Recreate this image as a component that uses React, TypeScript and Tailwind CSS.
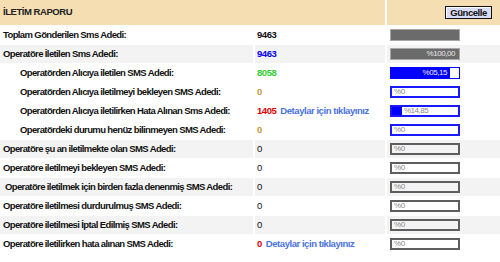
import React from "react";

type BarKind = "solid" | "blueFull" | "blue" | "gray";

type ReportRow = {
  label: string;
  indent?: "sub" | "space";
  value: string;
  valueClass: string;
  link?: boolean;
  gray?: boolean;
  bar: BarKind;
  barText?: string;
  fill?: number;
};

const rows: ReportRow[] = [
  { label: "Toplam Gönderilen Sms Adedi:", value: "9463", valueClass: "font-bold text-[#111]", bar: "solid" },
  { label: "Operatöre İletilen Sms Adedi:", value: "9463", valueClass: "font-bold text-[#0000ff]", gray: true, bar: "solid", barText: "%100,00" },
  { label: "Operatörden Alıcıya iletilen SMS Adedi:", indent: "sub", value: "8058", valueClass: "font-bold text-[#33cc33]", bar: "blueFull", barText: "%05,15" },
  { label: "Operatörden Alıcıya iletilmeyi bekleyen SMS Adedi:", indent: "sub", value: "0", valueClass: "font-bold text-[#c8963c]", bar: "blue", barText: "%0" },
  { label: "Operatörden Alıcıya iletilirken Hata Alınan Sms Adedi:", indent: "sub", value: "1405", valueClass: "font-bold text-[#e00000]", link: true, bar: "blue", barText: "%14,85", fill: 15 },
  { label: "Operatördeki durumu henüz bilinmeyen SMS Adedi:", indent: "sub", value: "0", valueClass: "font-bold text-[#c8963c]", bar: "blue", barText: "%0" },
  { label: "Operatöre şu an iletilmekte olan SMS Adedi:", value: "0", valueClass: "text-[#111]", gray: true, bar: "gray", barText: "%0" },
  { label: "Operatöre iletilmeyi bekleyen SMS Adedi:", value: "0", valueClass: "text-[#111]", bar: "gray", barText: "%0" },
  { label: "Operatöre iletilmek için birden fazla denenmiş SMS Adedi:", indent: "space", value: "0", valueClass: "text-[#111]", gray: true, bar: "gray", barText: "%0" },
  { label: "Operatöre iletilmesi durdurulmuş SMS Adedi:", value: "0", valueClass: "text-[#111]", bar: "gray", barText: "%0" },
  { label: "Operatöre iletilmesi İptal Edilmiş SMS Adedi:", value: "0", valueClass: "text-[#111]", gray: true, bar: "gray", barText: "%0" },
  { label: "Operatöre iletilirken hata alınan SMS Adedi:", value: "0", valueClass: "font-bold text-[#e00000]", link: true, bar: "gray", barText: "%0" },
];

function Bar({ row }: { row: ReportRow }) {
  if (row.bar === "solid") {
    return (
      <div className="flex h-[12px] w-[70px] items-center justify-end border border-[#a8a8a8] bg-[#6b6b6b] pr-[4px] text-[8px] leading-none text-[#e8e8e8]">
        {row.barText}
      </div>
    );
  }
  if (row.bar === "blueFull") {
    // dolu mavi bar, sağda küçük beyaz kutu
    return (
      <div className="flex h-[12px] w-[70px] items-center justify-end gap-[3px] border border-[#0000ff] bg-[#0000ff] text-[8px] leading-none text-[#e8e8ff]">
        <span>{row.barText}</span>
        <span className="h-[10px] w-[9px] bg-white" />
      </div>
    );
  }
  const border = row.bar === "blue" ? "border-[#1a1aff]" : "border-[#5e5e5e]";
  return (
    <div className={`flex h-[12px] w-[70px] items-center border-2 ${border} text-[8px] leading-none text-[#8a8a8a]`}>
      {row.fill ? (
        <span className="h-full bg-[#0000ff]" style={{ width: `${row.fill}%` }} />
      ) : null}
      <span className="pl-[2px]">{row.barText}</span>
    </div>
  );
}

export default function App() {
  return (
    <div className="h-[262px] w-[500px] overflow-hidden bg-white font-['Tahoma','Liberation_Sans',Arial,sans-serif] text-[9.5px] tracking-[-0.45px]">
      <div className="flex flex-col gap-[1px]">
        <div className="grid h-[25px] grid-cols-[385px_113px] gap-x-[2px] bg-white">
          <div className="flex items-center bg-[#f4deb2] pl-[3px] font-bold text-[#222]">İLETİM RAPORU</div>
          <div className="flex items-center justify-end bg-[#f4deb2] pr-[8px]">
            <button
              type="button"
              className="h-[13px] w-[47px] border border-[#111] bg-[#d9dcf6] text-[9.5px] leading-none font-bold text-[#111] shadow-[inset_1px_1px_0_#fff]"
            >
              Güncelle
            </button>
          </div>
        </div>

        {rows.map((row) => {
          const cell = row.gray ? "bg-[#f3f3f3]" : "bg-white";
          const pad = row.indent === "sub" ? "pl-[20px]" : row.indent === "space" ? "pl-[5px]" : "pl-[3px]";
          return (
            <div key={row.label} className="grid h-[18px] grid-cols-[253px_130px_113px] gap-x-[2px]">
              <div className={`flex items-center ${cell} ${pad} font-bold tracking-[-0.62px] whitespace-nowrap text-[#111]`}>{row.label}</div>
              <div className={`flex items-center gap-[4px] ${cell} pl-[2px] whitespace-nowrap`}>
                <span className={row.valueClass}>{row.value}</span>
                {row.link ? <span className="font-bold text-[#4a72e0]">Detaylar için tıklayınız</span> : null}
              </div>
              <div className={`flex items-center ${cell} pl-[3px]`}>
                <Bar row={row} />
              </div>
            </div>
          );
        })}
      </div>
    </div>
  );
}
